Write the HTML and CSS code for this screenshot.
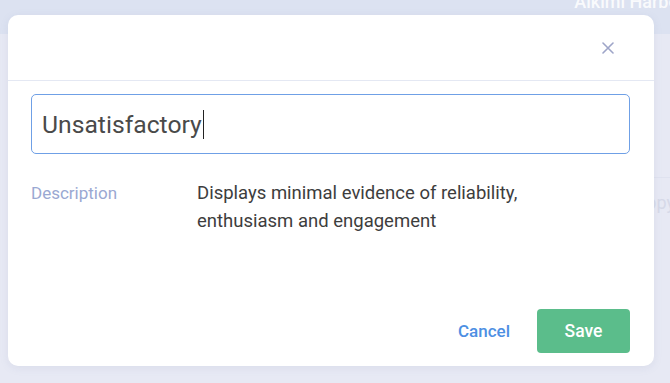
FILE: index.html
```html
<!DOCTYPE html>
<html>
<head>
<meta charset="utf-8">
<link rel="stylesheet" href="styles.css">
</head>
<body>
<div class="page">
  <div class="topbar"><span class="user">Aikimi Harbour</span></div>
  <div class="content">
    <div class="row-line"></div>
    <div class="bg-text">Unhappy</div>
  </div>
</div>
<div class="modal">
  <div class="modal-header">
    <button class="close" aria-label="Close">
      <svg width="12" height="12" viewBox="0 0 12 12"><path d="M1 1L11 11M11 1L1 11" stroke="#9ea5c8" stroke-width="1.6" stroke-linecap="round"/></svg>
    </button>
  </div>
  <div class="modal-body">
    <div class="name-field"><span class="name-text">Unsatisfactory</span><span class="caret"></span></div>
    <div class="desc-row">
      <div class="desc-label">Description</div>
      <div class="desc-text">Displays minimal evidence of reliability,<br>enthusiasm and engagement</div>
    </div>
  </div>
  <div class="modal-footer">
    <button class="btn-cancel">Cancel</button>
    <button class="btn-save">Save</button>
  </div>
</div>
</body>
</html>
```
FILE: styles.css
```css
html, body {
  margin: 0;
  padding: 0;
  width: 670px;
  height: 383px;
  overflow: hidden;
  font-family: Roboto, "Liberation Sans", sans-serif;
}
.page {
  height: 383px;
  display: flex;
  flex-direction: column;
  background: #e7e9f4;
}
.topbar {
  height: 34px;
  background: #dce2f1;
  display: flex;
  justify-content: flex-end;
  align-items: flex-start;
}
.user {
  color: #ffffff;
  opacity: 0.85;
  font-size: 18px;
  font-weight: 500;
  margin-top: -9px;
  margin-right: -25px;
  white-space: nowrap;
}
.content {
  flex: 1;
  position: relative;
}
.row-line {
  position: absolute;
  right: 0;
  width: 20px;
  top: 143px;
  height: 1px;
  background: #dfe2ef;
}
.bg-text {
  position: absolute;
  left: 605px;
  top: 158px;
  font-size: 18px;
  color: #d6d9e8;
  white-space: nowrap;
}
.modal {
  position: absolute;
  left: 8px;
  top: 15px;
  width: 646px;
  height: 351px;
  background: #ffffff;
  border-radius: 10px;
  box-shadow: 0 2px 8px rgba(120, 130, 170, 0.12);
  display: flex;
  flex-direction: column;
}
.modal-header {
  height: 65px;
  border-bottom: 1px solid #e4e8f3;
  display: flex;
  justify-content: flex-end;
  align-items: center;
  padding-right: 40px;
}
.close {
  border: 0;
  background: none;
  padding: 0;
  width: 12px;
  height: 12px;
  display: flex;
  margin-top: 1px;
}
.modal-body {
  padding: 13px 24px 0 23px;
  flex: 1;
}
.name-field {
  height: 58px;
  border: 1px solid #6fa0e6;
  border-radius: 5px;
  display: flex;
  align-items: center;
  padding-left: 10px;
}
.name-text {
  font-size: 24.7px;
  color: #4a4a4a;
}
.caret {
  width: 1px;
  height: 29px;
  background: #222;
  margin-left: 1px;
}
.desc-row {
  display: flex;
  margin-top: 25px;
}
.desc-label {
  width: 166px;
  font-size: 17px;
  line-height: 28px;
  color: #9aa8d2;
}
.desc-text {
  font-size: 18.5px;
  line-height: 28px;
  color: #3d3d3d;
}
.modal-footer {
  display: flex;
  justify-content: flex-end;
  align-items: center;
  padding: 0 24px 13px 0;
}
.btn-cancel {
  border: 0;
  background: none;
  font-family: inherit;
  font-size: 17px;
  font-weight: 500;
  color: #4d8fe3;
  padding: 0;
  margin-right: 27px;
}
.btn-save {
  width: 93px;
  height: 44px;
  border: 0;
  border-radius: 4px;
  background: #5bbd8b;
  color: #ffffff;
  font-family: inherit;
  font-size: 17.5px;
  font-weight: 500;
}
```
